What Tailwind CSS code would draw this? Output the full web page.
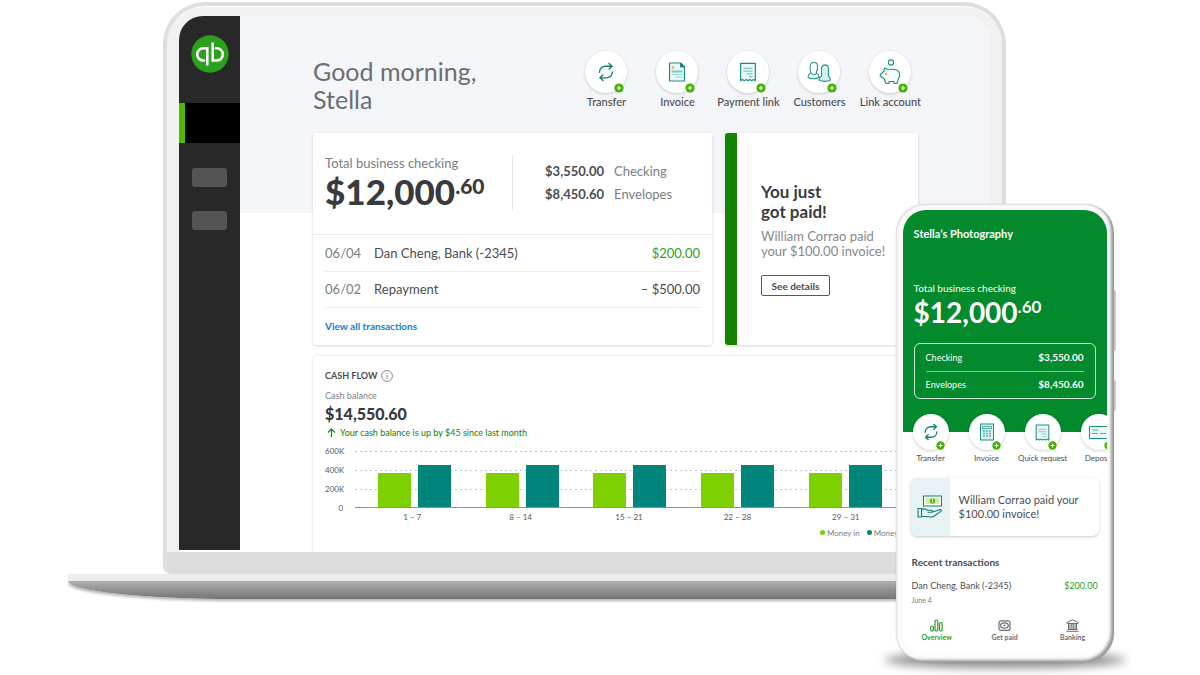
<!DOCTYPE html>
<html lang="en">
<head>
    <meta charset="UTF-8">
    <meta name="viewport" content="width=device-width, initial-scale=1">
    <title>Business checking</title>
    <script src="https://cdn.jsdelivr.net/npm/@tailwindcss/browser@4"></script>
</head>
<body class="bg-white text-[#4a4d50] font-['Lato','Liberation_Sans',sans-serif]">

  <!-- shared icons -->
  <svg class="hidden">
    <symbol id="plus" viewBox="0 0 10 10">
      <circle cx="5" cy="5" r="4.6" fill="#43b000"/>
      <path d="M5 2.7v4.6M2.7 5h4.6" stroke="#fff" stroke-width="1.1"/>
    </symbol>
    <symbol id="transfer" viewBox="0 0 24 24">
      <g fill="none" stroke="#12806a" stroke-width="1.7" stroke-linecap="round" stroke-linejoin="round">
        <path d="M4.2 12.2C4.2 7.8 7.6 5 11.6 5H19"/>
        <path d="M15.6 1.8L19.2 5l-3.4 3.4"/>
        <path d="M19.8 11.8c0 4.4-3.4 7.2-7.4 7.2H5"/>
        <path d="M8.4 22.2L4.8 19l3.4-3.4"/>
      </g>
    </symbol>
    <symbol id="receipt" viewBox="0 0 24 24">
      <path d="M4 2.5h16v19l-2-1.2-2 1.2-2-1.2-2 1.2-2-1.2-2 1.2-2-1.2-2 1.2z" fill="#e8f8f7" stroke="#1a8f86" stroke-width="1.3" stroke-linejoin="round"/>
      <path d="M7 8h10M7 11h10M10.500 14h6.500M12.500 17h4.500" stroke="#7cc9c4" stroke-width="1.2"/>
    </symbol>
  </svg>

  <main class="relative min-h-screen overflow-hidden pt-0.5">

    <!-- laptop -->
    <section class="ml-[5.67%] mr-[8.25%]">
      <div class="mx-[9.2%] overflow-hidden rounded-t-[42px] rounded-b-lg border-4 border-b-0 border-[#dedede] bg-[#f1f1f2]">
        <div class="rounded-t-[38px] border-t border-white px-3 pt-[9px]">
          <div class="flex overflow-hidden rounded-t-[24px] bg-white">

            <aside class="mb-0.5 w-[61px] shrink-0 bg-[#282828]">
              <a href="#" aria-label="Home" class="mx-auto mt-[19px] block size-[38px]">
                <svg viewBox="0 0 38 38">
                  <circle cx="19" cy="19" r="18.7" fill="#2ca01c"/>
                  <g fill="none" stroke="#fff" stroke-width="2.6" stroke-linecap="round">
                    <path d="M16.300 29.500V13.300H12.300a6 6 0 0 0 0 12.200H13"/>
                    <path d="M21.700 8.500V25.500H25.700a6 6 0 0 0 0-12.200H25"/>
                  </g>
                </svg>
              </a>
              <div class="mt-[30px] h-10 border-l-[6px] border-[#53b700] bg-black"></div>
              <div class="mx-[13px] mt-[25px] h-[19px] rounded-[3px] bg-[#545454]"></div>
              <div class="mx-[13px] mt-6 h-[19px] rounded-[3px] bg-[#545454]"></div>
            </aside>

            <div class="min-w-0 flex-1 bg-linear-to-b from-[#f3f5f9] from-[197px] to-white to-[197px] pl-[73px] pr-[72px]">

              <header class="flex items-start justify-between pt-[35px]">
                <h1 class="pt-1.5 text-[25px] leading-7 text-[#6b6e73]">Good morning,<br>Stella</h1>
                <nav class="-mr-2 flex text-[11px] leading-4 font-medium text-[#4a4d50]">
                  <a href="#" class="flex w-[71px] flex-col items-center gap-px whitespace-nowrap">
                    <span class="relative flex size-[42px] items-center justify-center rounded-full bg-white shadow-[0_1px_3px_rgba(0,0,0,.18)]">
                      <svg class="size-5"><use href="#transfer"/></svg>
                      <svg class="absolute right-[3px] bottom-0 size-2.5"><use href="#plus"/></svg>
                    </span>
                    Transfer
                  </a>
                  <a href="#" class="flex w-[71px] flex-col items-center gap-px whitespace-nowrap">
                    <span class="relative flex size-[42px] items-center justify-center rounded-full bg-white shadow-[0_1px_3px_rgba(0,0,0,.18)]">
                      <svg class="size-5" viewBox="0 0 20 20">
                        <path d="M2.500 1h11l4 4v14h-15z" fill="#e8f8f7" stroke="#1a8f86" stroke-width="1.200" stroke-linejoin="round"/>
                        <path d="M13.500 1v4h4z" fill="#12806a" stroke="#12806a" stroke-width=".8"/>
                        <circle cx="6" cy="5.500" r="1.200" fill="#f0a840"/>
                        <path d="M4.500 9.500h11" stroke="#7cc9c4" stroke-width="2"/>
                        <path d="M4.500 12.500h11M9 15h6.500" stroke="#9ad6d2"/>
                      </svg>
                      <svg class="absolute right-[3px] bottom-0 size-2.5"><use href="#plus"/></svg>
                    </span>
                    Invoice
                  </a>
                  <a href="#" class="flex w-[71px] flex-col items-center gap-px whitespace-nowrap">
                    <span class="relative flex size-[42px] items-center justify-center rounded-full bg-white shadow-[0_1px_3px_rgba(0,0,0,.18)]">
                      <svg class="size-[22px]"><use href="#receipt"/></svg>
                      <svg class="absolute right-[3px] bottom-0 size-2.5"><use href="#plus"/></svg>
                    </span>
                    Payment link
                  </a>
                  <a href="#" class="flex w-[71px] flex-col items-center gap-px whitespace-nowrap">
                    <span class="relative flex size-[42px] items-center justify-center rounded-full bg-white shadow-[0_1px_3px_rgba(0,0,0,.18)]">
                      <svg class="size-6" viewBox="0 0 24 24" fill="#fff" stroke="#2a958c" stroke-width="1.100" stroke-linejoin="round">
                        <path d="M12 20c0-2.500 1.200-3.200 2.600-4 .2-3-.8-6 .2-9 1.200-2.800 5.400-2.800 6.400 0 .9 3-.2 6 .2 9 1 .6 2 1.500 2 4-2.500 1.800-8.600 1.800-11.400 0z" fill="#d5f1ef"/>
                        <path d="M1 17.200c0-3 1.700-3.500 3-4.400C2.900 10.500 3 8 3.200 5.500c.5-4 6.800-4 7.300 0 .2 2.500.1 5-1.200 7.300 1.300.9 2.900 1.400 2.900 4.400-2.500 2-8.700 2-11.200 0z"/>
                        <path d="M4.300 13.200c1 2 4 2 5 0" fill="none"/>
                      </svg>
                      <svg class="absolute right-[3px] bottom-0 size-2.5"><use href="#plus"/></svg>
                    </span>
                    Customers
                  </a>
                  <a href="#" class="flex w-[71px] flex-col items-center gap-px whitespace-nowrap">
                    <span class="relative flex size-[42px] items-center justify-center rounded-full bg-white shadow-[0_1px_3px_rgba(0,0,0,.18)]">
                      <svg class="size-[26px]" viewBox="0 0 26 26" fill="none" stroke="#1a8f86" stroke-width="1.100" stroke-linejoin="round">
                        <circle cx="14" cy="3.500" r="2.600"/>
                        <path d="M7.500 9l-.5 3.200L3.300 15.500v1.700l4 2.800 1.700 4.500h3v-2h5v2h3l1-4c1.600-1.800 2-3.800 1.600-6-.8-3-3.100-4.200-6.600-4.200h-5.500z" fill="#f3fbfa"/>
                        <circle cx="9" cy="15" r=".7" fill="#f0a840" stroke="#f0a840"/>
                      </svg>
                      <svg class="absolute right-[3px] bottom-0 size-2.5"><use href="#plus"/></svg>
                    </span>
                    Link account
                  </a>
                </nav>
              </header>

              <div class="mt-5 flex gap-[13px]">
                <section class="flex-1 rounded-[3px] bg-white shadow-[0_1px_3px_rgba(0,0,0,.16)]">
                  <div class="flex border-b border-[#ececec] px-3 pt-[22px] pb-[23px] whitespace-nowrap">
                    <div class="w-[188px] border-r border-[#e3e5e8]">
                      <h2 class="text-[13px] leading-4 text-[#7a7d81]">Total business checking</h2>
                      <p class="flex items-start text-[35px] leading-10 font-black text-[#393a3d]">$12,000<span class="text-[21px] leading-[30px]">.60</span></p>
                    </div>
                    <dl class="grid grid-cols-[60px_auto] content-start gap-x-[9px] gap-y-[7px] pt-2 pl-8 text-[13px] leading-4">
                      <dd class="font-bold">$3,550.00</dd>
                      <dt class="text-[#7a7d81]">Checking</dt>
                      <dd class="font-bold">$8,450.60</dd>
                      <dt class="text-[#7a7d81]">Envelopes</dt>
                    </dl>
                  </div>
                  <div class="px-3">
                    <table class="w-full text-[13px] leading-4">
                      <tr class="h-9 border-b border-[#ededed]">
                        <td class="w-[49px] text-[#7a7d81]">06/04</td>
                        <td>Dan Cheng, Bank (-2345)</td>
                        <td class="text-right text-[#2ca01c]">$200.00</td>
                      </tr>
                      <tr class="h-9 border-b border-[#ededed]">
                        <td class="text-[#7a7d81]">06/02</td>
                        <td>Repayment</td>
                        <td class="text-right">– $500.00</td>
                      </tr>
                    </table>
                    <a href="#" class="mt-2.5 mb-[11px] block text-[10px] leading-4 font-bold text-[#0f80cc]">View all transactions</a>
                  </div>
                </section>

                <section class="w-[193px] shrink-0 rounded-[3px] border-l-12 border-[#128400] bg-white pt-[49px] pl-6 whitespace-nowrap shadow-[0_1px_3px_rgba(0,0,0,.16)]">
                  <h2 class="text-[17px] leading-5 font-bold text-[#393a3d]">You just<br>got paid!</h2>
                  <p class="mt-[7px] text-[13px] leading-[15px] text-[#85888c]">William Corrao paid<br>your $100.00 invoice!</p>
                  <button class="mt-4 h-[21px] w-[69px] rounded-[2px] border border-[#55585c] text-[10px] leading-4 font-bold">See details</button>
                </section>
              </div>

              <section class="mt-[11px] rounded-t-[3px] bg-white px-3 pt-3 pb-[14px] shadow-[0_0_3px_rgba(0,0,0,.16)]">
                <h2 class="flex items-center gap-1 text-[9px] leading-4 font-bold">
                  CASH FLOW
                  <svg class="size-3" viewBox="0 0 12 12" fill="none" stroke="#7a7d81" stroke-width=".9">
                    <circle cx="6" cy="6" r="5.400"/>
                    <path d="M6 3v1M6 5v4"/>
                  </svg>
                </h2>
                <p class="mt-1 text-[9px] leading-4 text-[#7a7d81]">Cash balance</p>
                <p class="text-base leading-5 font-black text-[#393a3d]">$14,550.60</p>
                <p class="mt-px flex items-center gap-1 pl-0.5 text-[9px] leading-4 text-[#108000]">
                  <svg class="size-[9px]" viewBox="0 0 9 9" fill="none" stroke="#108000" stroke-width="1.100"><path d="M4.500 9V1M1 4.500l3.500-3.500L8 4.500"/></svg>
                  Your cash balance is up by $45 since last month
                </p>

                <div class="mt-[5px] flex gap-3 pr-1.5 text-[8px] text-[#55585c]">
                  <ul class="flex w-[18px] flex-col gap-[9px] text-right leading-[10px]">
                    <li>600K</li>
                    <li>400K</li>
                    <li>200K</li>
                    <li>0</li>
                  </ul>
                  <div class="flex-1 pt-1">
                    <div class="relative flex h-[58px] items-end border-b border-[#8d9096] pl-[5px]">
                      <svg class="absolute inset-x-0 top-0 h-[58px] w-full" stroke="#c2c4c8" stroke-dasharray="2 3">
                        <path d="M0 1.500h900M0 20.500h900M0 39.500h900"/>
                      </svg>
                      <div class="relative flex w-full items-end justify-around">
                        <div class="flex items-end gap-[7px]"><i class="h-[34px] w-[33px] bg-[#7fd000]"></i><i class="h-[42px] w-[33px] bg-[#00857c]"></i></div>
                        <div class="flex items-end gap-[7px]"><i class="h-[34px] w-[33px] bg-[#7fd000]"></i><i class="h-[42px] w-[33px] bg-[#00857c]"></i></div>
                        <div class="flex items-end gap-[7px]"><i class="h-[34px] w-[33px] bg-[#7fd000]"></i><i class="h-[42px] w-[33px] bg-[#00857c]"></i></div>
                        <div class="flex items-end gap-[7px]"><i class="h-[34px] w-[33px] bg-[#7fd000]"></i><i class="h-[42px] w-[33px] bg-[#00857c]"></i></div>
                        <div class="flex items-end gap-[7px]"><i class="h-[34px] w-[33px] bg-[#7fd000]"></i><i class="h-[42px] w-[33px] bg-[#00857c]"></i></div>
                      </div>
                    </div>
                    <div class="mt-1 grid grid-cols-5 pl-[3px] text-center leading-[10px]">
                      <span>1 – 7</span>
                      <span>8 – 14</span>
                      <span>15 – 21</span>
                      <span>22 – 28</span>
                      <span>29 – 31</span>
                    </div>
                  </div>
                </div>
                <p class="-mr-1.5 mt-1.5 flex items-center justify-end gap-[7px] text-[8px] leading-[10px] text-[#7a7d81]">
                  <span class="flex items-center gap-0.5"><i class="size-[5px] rounded-full bg-[#7fd000]"></i>Money in</span>
                  <span class="flex items-center gap-0.5"><i class="size-[5px] rounded-full bg-[#00857c]"></i>Money out</span>
                </p>
              </section>
            </div>
          </div>
        </div>
        <div class="h-[22px] bg-[#dcdcdc]"></div>
      </div>
      <!-- laptop base -->
      <div class="h-[7px] bg-[#ededed]"></div>
      <div class="h-[18px] rounded-[0_0_170px_170px/0_0_18px_18px] bg-linear-to-b from-[#b0b0b0] to-[#747474] shadow-[0_2px_3px_rgba(0,0,0,.3)]"></div>
    </section>

    <!-- phone -->
    <section class="absolute top-[204px] right-[7.2%] w-[218px]">
      <div class="absolute -inset-x-3 -bottom-1.5 h-4 rounded-[50%] bg-black/45 blur-[5px]"></div>
      <div class="absolute top-[86px] -right-0.5 h-[61px] w-1 rounded-r-[2px] bg-[#cfcfcf]"></div>
      <div class="absolute top-[176px] -right-0.5 h-[31px] w-1 rounded-r-[2px] bg-[#cfcfcf]"></div>
      <div class="relative rounded-[29px] bg-[#fbfbfb] p-[7px] pt-1.5 shadow-[inset_-3px_-2px_3px_rgba(0,0,0,.4),inset_1px_1px_2px_rgba(0,0,0,.12),0_0_2px_rgba(0,0,0,.15)]">
        <div class="overflow-hidden rounded-[23px] bg-white">

          <div class="bg-[#028a2c] px-[11px] pt-4 pb-[33px] whitespace-nowrap text-white">
            <h2 class="text-[11px] leading-4 font-bold">Stella’s Photography</h2>
            <p class="mt-[38px] text-[10px] leading-4">Total business checking</p>
            <p class="flex items-start text-[28px] leading-[33px] font-bold">$12,000<span class="text-[17px] leading-[22px]">.60</span></p>
            <dl class="mt-3.5 rounded-md border border-white/80 px-[11px] text-[9px] leading-[13px]">
              <div class="flex justify-between border-b border-white/50 py-[7px]"><dt>Checking</dt><dd class="text-[10px] font-bold">$3,550.00</dd></div>
              <div class="flex justify-between pt-1.5 pb-[7px]"><dt>Envelopes</dt><dd class="text-[10px] font-bold">$8,450.60</dd></div>
            </dl>
          </div>

          <nav class="-mt-[18px] flex text-[8px] leading-[10px]">
            <a href="#" class="flex w-14 shrink-0 flex-col items-center gap-[3px] whitespace-nowrap">
              <span class="relative flex size-9 items-center justify-center rounded-full bg-white shadow-[0_1px_3px_rgba(0,0,0,.2)]">
                <svg class="size-[18px]"><use href="#transfer"/></svg>
                <svg class="absolute right-1 bottom-0 size-[9px]"><use href="#plus"/></svg>
              </span>
              Transfer
            </a>
            <a href="#" class="flex w-14 shrink-0 flex-col items-center gap-[3px] whitespace-nowrap">
              <span class="relative flex size-9 items-center justify-center rounded-full bg-white shadow-[0_1px_3px_rgba(0,0,0,.2)]">
                <svg class="size-[18px]" viewBox="0 0 18 18" fill="#dff4f2" stroke="#1a8f86" stroke-width="1">
                  <rect x="2.500" y="1" width="13" height="16"/>
                  <path d="M4.500 3.500h9v2h-9z" stroke-width=".7"/>
                  <path d="M5 8h2M8 8h2M11 8h2M5 10.500h2M8 10.500h2M11 10.500h2M5 13h2M8 13h2M11 13h2" stroke="#4db3ad" stroke-width="1.400"/>
                </svg>
                <svg class="absolute right-1 bottom-0 size-[9px]"><use href="#plus"/></svg>
              </span>
              Invoice
            </a>
            <a href="#" class="flex w-14 shrink-0 flex-col items-center gap-[3px] whitespace-nowrap">
              <span class="relative flex size-9 items-center justify-center rounded-full bg-white shadow-[0_1px_3px_rgba(0,0,0,.2)]">
                <svg class="size-[19px]"><use href="#receipt"/></svg>
                <svg class="absolute right-1 bottom-0 size-[9px]"><use href="#plus"/></svg>
              </span>
              Quick request
            </a>
            <a href="#" class="flex w-14 shrink-0 flex-col items-center gap-[3px] whitespace-nowrap">
              <span class="relative flex size-9 items-center justify-center rounded-full bg-white shadow-[0_1px_3px_rgba(0,0,0,.2)]">
                <svg class="h-[13px] w-5" viewBox="0 0 20 13" fill="#e8f8f7" stroke="#1a8f86">
                  <path d="M.5.500h19v12H.5z"/>
                  <path d="M3 4h6M3 7.500h6M11 7.500h6" stroke="#4db3ad"/>
                </svg>
                <svg class="absolute right-1 bottom-0 size-[9px]"><use href="#plus"/></svg>
              </span>
              Deposit
            </a>
          </nav>

          <div class="mx-2 mt-[15px] flex items-stretch overflow-hidden rounded-md bg-white shadow-[0_1px_3px_rgba(0,0,0,.22)]">
            <div class="flex w-[39px] items-center justify-center bg-[#e6f2f3]">
              <svg class="h-6 w-[26px]" viewBox="0 0 26 24" fill="none" stroke="#12807a" stroke-width="1.100" stroke-linejoin="round">
                <path d="M6.500 1h18v10h-18z" fill="#fff"/>
                <path d="M8.500 3h14v6h-14z" fill="#d6ec9c" stroke="none"/>
                <circle cx="15.500" cy="6" r="2.600" fill="#53b700" stroke="none"/>
                <path d="M15.500 4.200v3.600" stroke="#fff" stroke-width=".8"/>
                <path d="M1 13.500h3.500v8.500H1zM4.500 14.500c3-1.500 4.500-.5 6 .7h4c1.500 0 1.500 2 0 2h-4M15.500 17l7-2.300c2-.6 2.500.8 1.200 1.700l-6.700 4.800c-1.500 1-3 1-5 .6l-7.500-.6"/>
              </svg>
            </div>
            <p class="py-[15px] pl-[9px] text-[11px] leading-[14px] whitespace-nowrap">William Corrao paid your<br>$100.00 invoice!</p>
          </div>

          <div class="px-[9px] pt-[18px] whitespace-nowrap">
            <h3 class="text-[10px] leading-4 font-bold">Recent transactions</h3>
            <p class="mt-2 flex justify-between text-[9px] leading-4">Dan Cheng, Bank (-2345)<span class="text-[#2ca01c]">$200.00</span></p>
            <p class="mt-px text-[7px] leading-[10px] text-[#7a7d81]">June 4</p>
          </div>

          <nav class="grid grid-cols-3 pt-3.5 pb-[13px] text-[7px] leading-[9px] font-bold text-[#6b6e73]">
            <a href="#" class="flex flex-col items-center gap-px text-[#2ca01c]">
              <svg class="size-[13px]" viewBox="0 0 13 13" fill="none" stroke="#2ca01c" stroke-width="1.200">
                <rect x=".7" y="7" width="2.600" height="5" rx="1.300"/>
                <rect x="5" y="1" width="2.800" height="11" rx="1.300"/>
                <rect x="9.500" y="3.500" width="2.600" height="8.500" rx="1.300"/>
              </svg>
              Overview
            </a>
            <a href="#" class="flex flex-col items-center gap-px">
              <svg class="size-[13px]" viewBox="0 0 13 13" fill="none" stroke="#6b6e73" stroke-width="1.200">
                <rect x="1" y="1.800" width="11" height="9.600" rx="2"/>
                <ellipse cx="6.500" cy="6.500" rx="3.800" ry="2.700"/>
                <circle cx="6.500" cy="6.500" r="1" fill="#6b6e73" stroke="none"/>
              </svg>
              Get paid
            </a>
            <a href="#" class="flex flex-col items-center gap-px">
              <svg class="size-[13px]" viewBox="0 0 13 13" fill="none" stroke="#6b6e73" stroke-linejoin="round">
                <path d="M1 4.500v-1L6.500.8 12 3.500v1zM.5 12.300h12M1.500 10.500h10M2.500 4.500v6M4 4.500v6M5.800 4.500v6M7.200 4.500v6M9 4.500v6M10.500 4.500v6"/>
              </svg>
              Banking
            </a>
          </nav>
        </div>
      </div>
    </section>
  </main>

</body>
</html>
